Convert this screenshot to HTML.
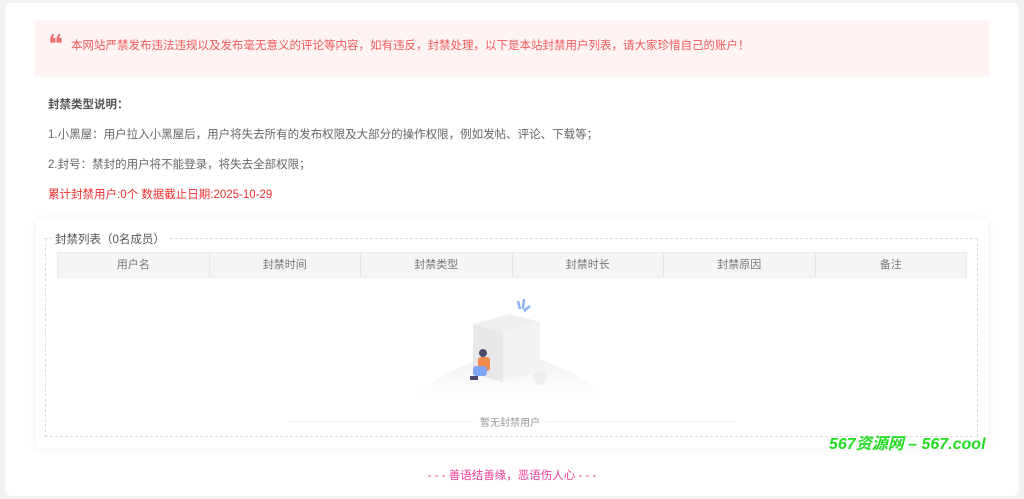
<!DOCTYPE html>
<html><head><meta charset="utf-8"><style>
*{margin:0;padding:0;box-sizing:border-box}
body{width:1024px;height:499px;background:#f2f2f2;font-family:"Liberation Sans","Noto Sans CJK SC",sans-serif;font-size:11.5px;position:relative;overflow:hidden}
.card{position:absolute;left:5px;top:3px;width:1014px;height:493px;background:#fff;border-radius:6px}
.notice{position:absolute;left:34px;top:20px;width:956px;height:57px;background:#fff4f4;border-radius:4px}
.notice .q{position:absolute;left:14px;top:12px;color:#f07070;font:bold 26px "DejaVu Sans",sans-serif;line-height:26px}
.notice .t{position:absolute;left:37px;top:17px;color:#f05a5a;font-size:11.5px}
.p{position:absolute;left:48px;color:#666;font-size:11.5px}
.inner{position:absolute;left:36px;top:219px;width:952px;height:229px;background:#fff;border-radius:4px;box-shadow:0 0 8px rgba(0,0,0,.07)}
.fs{position:absolute;left:45px;top:238px;width:933px;height:199px;border:1px dashed #ddd}
.lg{position:absolute;left:52px;top:231px;background:#fff;padding:0 3px;color:#555;font-size:11.5px}
.th{position:absolute;left:57px;top:252px;width:910px;height:26px;background:#f5f5f5;display:flex;border:1px solid #ececec}
.th div{flex:1;text-align:center;line-height:24px;color:#777;font-size:11px;border-right:1px solid #e6e6e6}
.th div:last-child{border-right:none}
</style></head><body>
<div class="card"></div>
<div class="notice"><div class="q">❝</div><div class="t">本网站严禁发布违法违规以及发布毫无意义的评论等内容，如有违反，封禁处理，以下是本站封禁用户列表，请大家珍惜自己的账户！</div></div>
<div class="p" style="top:96px;font-weight:bold;color:#555">封禁类型说明：</div>
<div class="p" style="top:126px">1.小黑屋：用户拉入小黑屋后，用户将失去所有的发布权限及大部分的操作权限，例如发帖、评论、下载等；</div>
<div class="p" style="top:156px">2.封号：禁封的用户将不能登录，将失去全部权限；</div>
<div class="p" style="top:186px;color:#f03030">累计封禁用户:0个 数据截止日期:2025-10-29</div>
<div class="inner"></div>
<div class="fs"></div>
<div class="lg">封禁列表（0名成员）</div>
<div class="th"><div>用户名</div><div>封禁时间</div><div>封禁类型</div><div>封禁时长</div><div>封禁原因</div><div>备注</div></div>
<svg style="position:absolute;left:410px;top:296px" width="205" height="110">
<defs><linearGradient id="g" x1="0" y1="0" x2="0" y2="1"><stop offset="0" stop-color="#f0f0f0"/><stop offset="1" stop-color="#fff"/></linearGradient></defs>
<path d="M5 100 Q100 20 195 100 Z" fill="url(#g)"/>
<polygon points="63,28 100,18 130,26 93,36" fill="#efefef"/>
<polygon points="63,28 93,36 93,86 63,78" fill="#e8e8e8"/>
<polygon points="93,36 130,26 130,74 93,86" fill="#f3f3f3"/>
<path d="M108 5 l2 8 M114 3 l-1 10 M120 10 l-6 5" stroke="#8ab4f8" stroke-width="2.5"/>
<circle cx="130" cy="82" r="7" fill="#eee"/>
<circle cx="73" cy="57" r="4" fill="#4a4a6a"/>
<rect x="68" y="61" width="12" height="14" rx="3" fill="#f28a50"/>
<rect x="63" y="70" width="14" height="10" rx="3" fill="#7fa4f0"/>
<rect x="60" y="80" width="8" height="4" fill="#4a4a6a"/>
</svg>
<div style="position:absolute;left:288px;top:421px;width:448px;border-top:1px solid #eee"></div>
<div style="position:absolute;left:474px;top:414px;background:#fff;padding:0 6px;color:#999;font-size:10px">暂无封禁用户</div>
<div style="position:absolute;left:829px;top:430px;color:#22dd22;font-weight:bold;font-style:italic;font-size:16px">567资源网 – 567.cool</div>
<div style="position:absolute;left:0;width:1024px;top:467px;text-align:center;color:#f0409a;font-size:11.5px">- - - 善语结善缘，恶语伤人心 - - -</div>
</body></html>
